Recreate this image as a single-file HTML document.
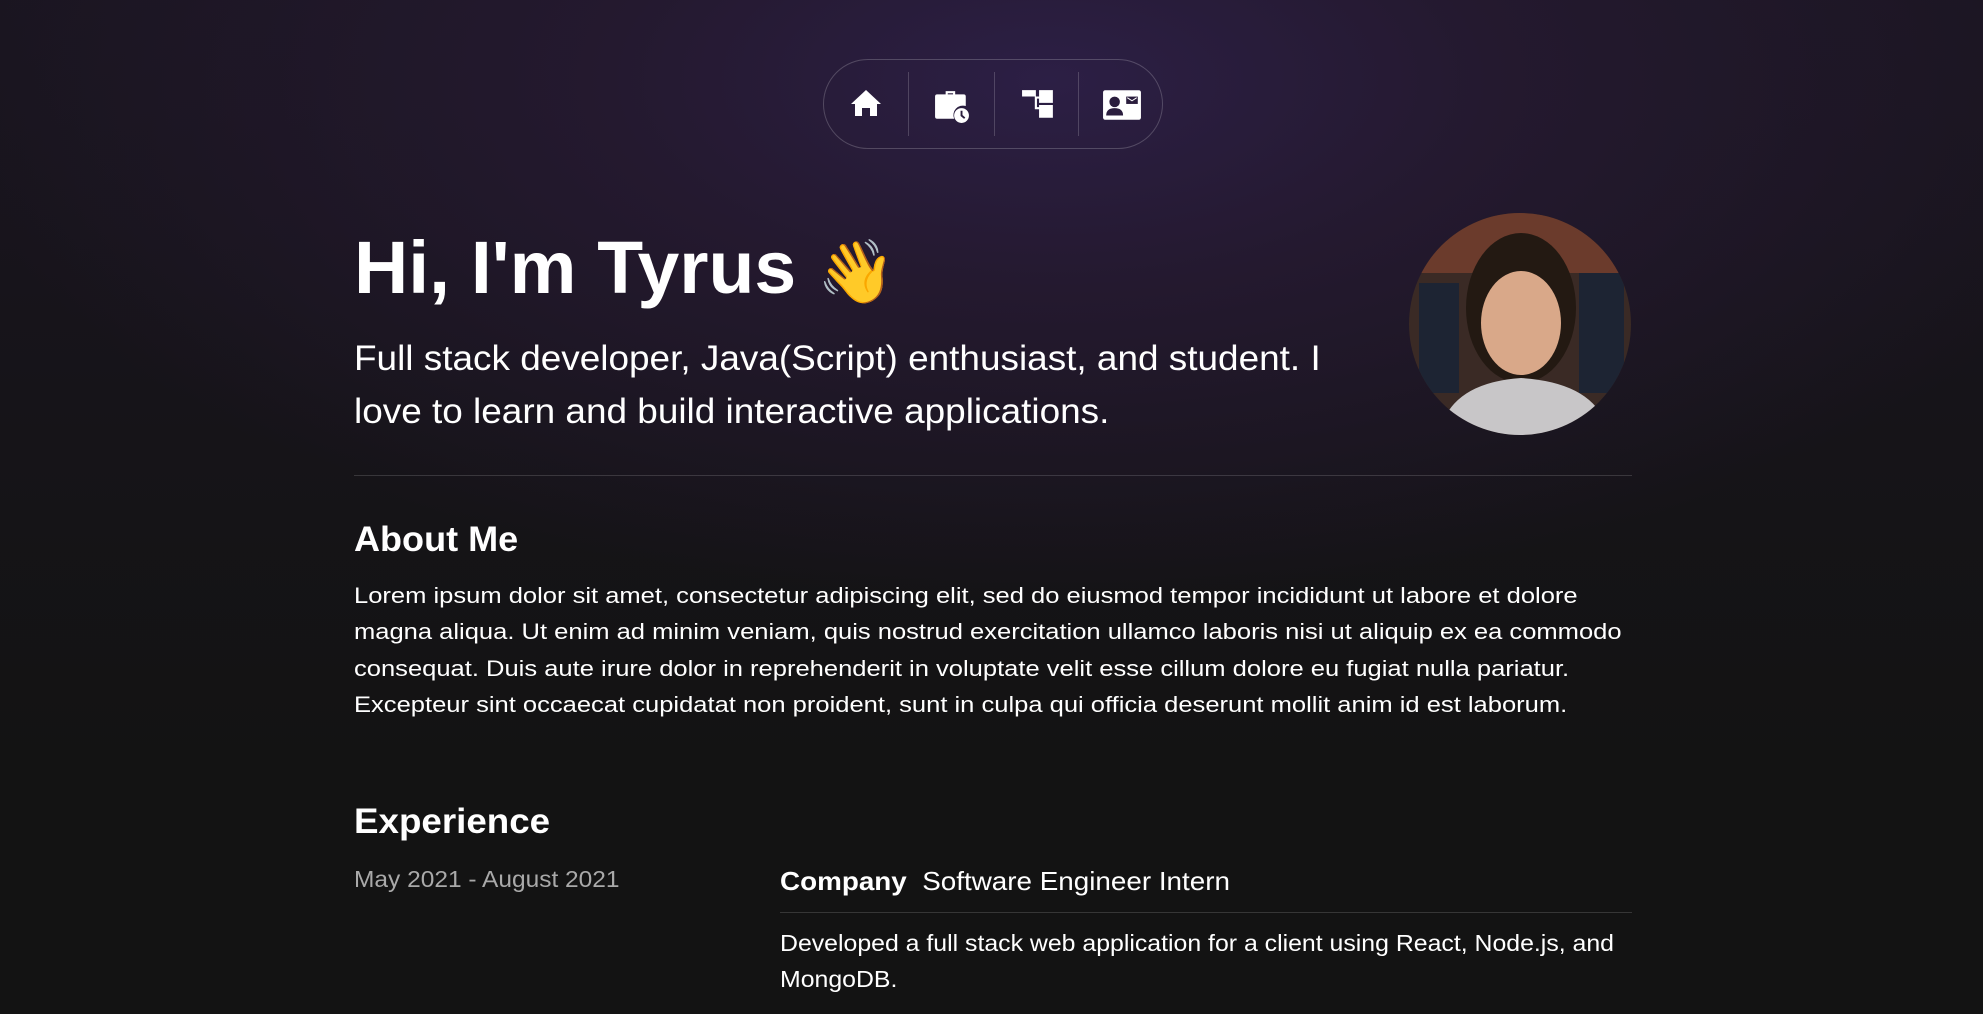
<!DOCTYPE html>
<html><head><meta charset="utf-8"><style>
html,body{margin:0;padding:0}
body{width:1983px;height:1014px;overflow:hidden;position:relative;background:#131313;font-family:"Liberation Sans",sans-serif;color:#fff}
.bg{position:absolute;left:0;top:0;width:1983px;height:760px;
background:radial-gradient(ellipse 1100px 520px at 1050px 80px,#2c1f45 0%,#24192f 40%,rgba(19,19,19,0) 100%),linear-gradient(180deg,rgba(30,22,40,.6) 0%,rgba(19,19,19,0) 100%)}
.a{position:absolute;white-space:nowrap;transform-origin:0 0}
.nav{position:absolute;left:823px;top:59px;width:340px;height:90px;border:1px solid rgba(255,255,255,.2);border-radius:46px;box-sizing:border-box}
.div{position:absolute;top:12px;width:1px;height:64px;background:rgba(255,255,255,.18)}
.ic{position:absolute;top:29px}
</style></head><body>
<div class="bg"></div>
<div class="nav">
 <div class="div" style="left:84px"></div><div class="div" style="left:170px"></div><div class="div" style="left:254px"></div>
 <svg class="ic" style="left:26px" width="32" height="30" viewBox="0 0 32 30"><path d="M16 1 L31 15 H27 V27 H20 V19 H12 V27 H5 V15 H1 Z" fill="#fff"/></svg>
 <svg class="ic" style="left:110px;top:28px" width="36" height="36" viewBox="0 0 34 34"><path d="M11 3 H20 V6 H28 Q30 6 30 8 V17 A9 9 0 0 0 19 29 H3 Q1 29 1 27 V8 Q1 6 3 6 H11 Z M13 5 V6 H18 V5 Z" fill="#fff"/><circle cx="26" cy="26" r="7" fill="#fff"/><path d="M26 21.5 V26 L29 28.5" stroke="#2a1d3d" stroke-width="1.8" fill="none"/></svg>
 <svg class="ic" style="left:197px" width="34" height="32" viewBox="0 0 32 30"><path d="M1 1 H14 V7 H17 V1 H30 V13 H17 V9 H15 V17 H17 V15 H30 V27 H17 V19 H13 V7 H1 Z" fill="#fff"/></svg>
 <svg class="ic" style="left:278px" width="40" height="32" viewBox="0 0 38 30"><rect x="1" y="1" width="36" height="28" rx="2" fill="#fff"/><circle cx="12" cy="12" r="5" fill="#2a1d3d"/><path d="M4 25 Q4 18 12 18 Q20 18 20 25 Z" fill="#2a1d3d"/><rect x="23" y="7" width="11" height="7" fill="#2a1d3d"/><path d="M24 8 L28.5 11 L33 8" stroke="#fff" stroke-width="1" fill="none"/></svg>
</div>

<div class="a" style="left:354px;top:218px;font-size:74px;font-weight:bold;line-height:100px;transform:scaleX(1.015)">Hi, I'm Tyrus <span style="font-size:62px;font-family:'Noto Color Emoji','DejaVu Sans',sans-serif">👋</span></div>
<div class="a" style="left:354px;top:332px;font-size:35px;line-height:53px;transform:scaleX(1.055)">Full stack developer, Java(Script) enthusiast, and student. I<br>love to learn and build interactive applications.</div>

<svg class="a" style="left:1409px;top:213px" width="222" height="222" viewBox="0 0 222 222">
 <defs><clipPath id="c"><circle cx="111" cy="111" r="111"/></clipPath></defs>
 <g clip-path="url(#c)">
  <rect width="222" height="222" fill="#3a2a25"/>
  <rect x="0" y="0" width="222" height="60" fill="#6b3b2c"/>
  <rect x="10" y="70" width="40" height="110" fill="#1d2433"/>
  <rect x="170" y="60" width="45" height="120" fill="#1d2433"/>
  <ellipse cx="112" cy="95" rx="55" ry="75" fill="#231912"/>
  <ellipse cx="112" cy="110" rx="40" ry="52" fill="#d9a889"/>
  <path d="M30 222 Q40 170 112 165 Q190 170 200 222 Z" fill="#c8c6c8"/>
 </g>
</svg>

<div class="a" style="left:354px;top:475px;width:1278px;height:1px;background:rgba(255,255,255,.15)"></div>

<div class="a" style="left:354px;top:516px;font-size:35px;font-weight:bold;line-height:48px;transform:scaleX(1.03)">About Me</div>
<div class="a" style="left:354px;top:578px;font-size:22.5px;line-height:36.3px;transform:scaleX(1.135)">Lorem ipsum dolor sit amet, consectetur adipiscing elit, sed do eiusmod tempor incididunt ut labore et dolore<br>magna aliqua. Ut enim ad minim veniam, quis nostrud exercitation ullamco laboris nisi ut aliquip ex ea commodo<br>consequat. Duis aute irure dolor in reprehenderit in voluptate velit esse cillum dolore eu fugiat nulla pariatur.<br>Excepteur sint occaecat cupidatat non proident, sunt in culpa qui officia deserunt mollit anim id est laborum.</div>

<div class="a" style="left:354px;top:798px;font-size:35px;font-weight:bold;line-height:48px;transform:scaleX(1.05)">Experience</div>
<div class="a" style="left:354px;top:864px;font-size:23px;line-height:30px;color:#a9a9a9;transform:scaleX(1.065)">May 2021 - August 2021</div>
<div class="a" style="left:780px;top:865px;font-size:26px;line-height:32px;transform:scaleX(1.07)"><b>Company</b>&nbsp; Software Engineer Intern</div>
<div class="a" style="left:780px;top:912px;width:852px;height:1px;background:rgba(255,255,255,.15)"></div>
<div class="a" style="left:780px;top:925px;font-size:23px;line-height:36px;transform:scaleX(1.08)">Developed a full stack web application for a client using React, Node.js, and<br>MongoDB.</div>
</body></html>
